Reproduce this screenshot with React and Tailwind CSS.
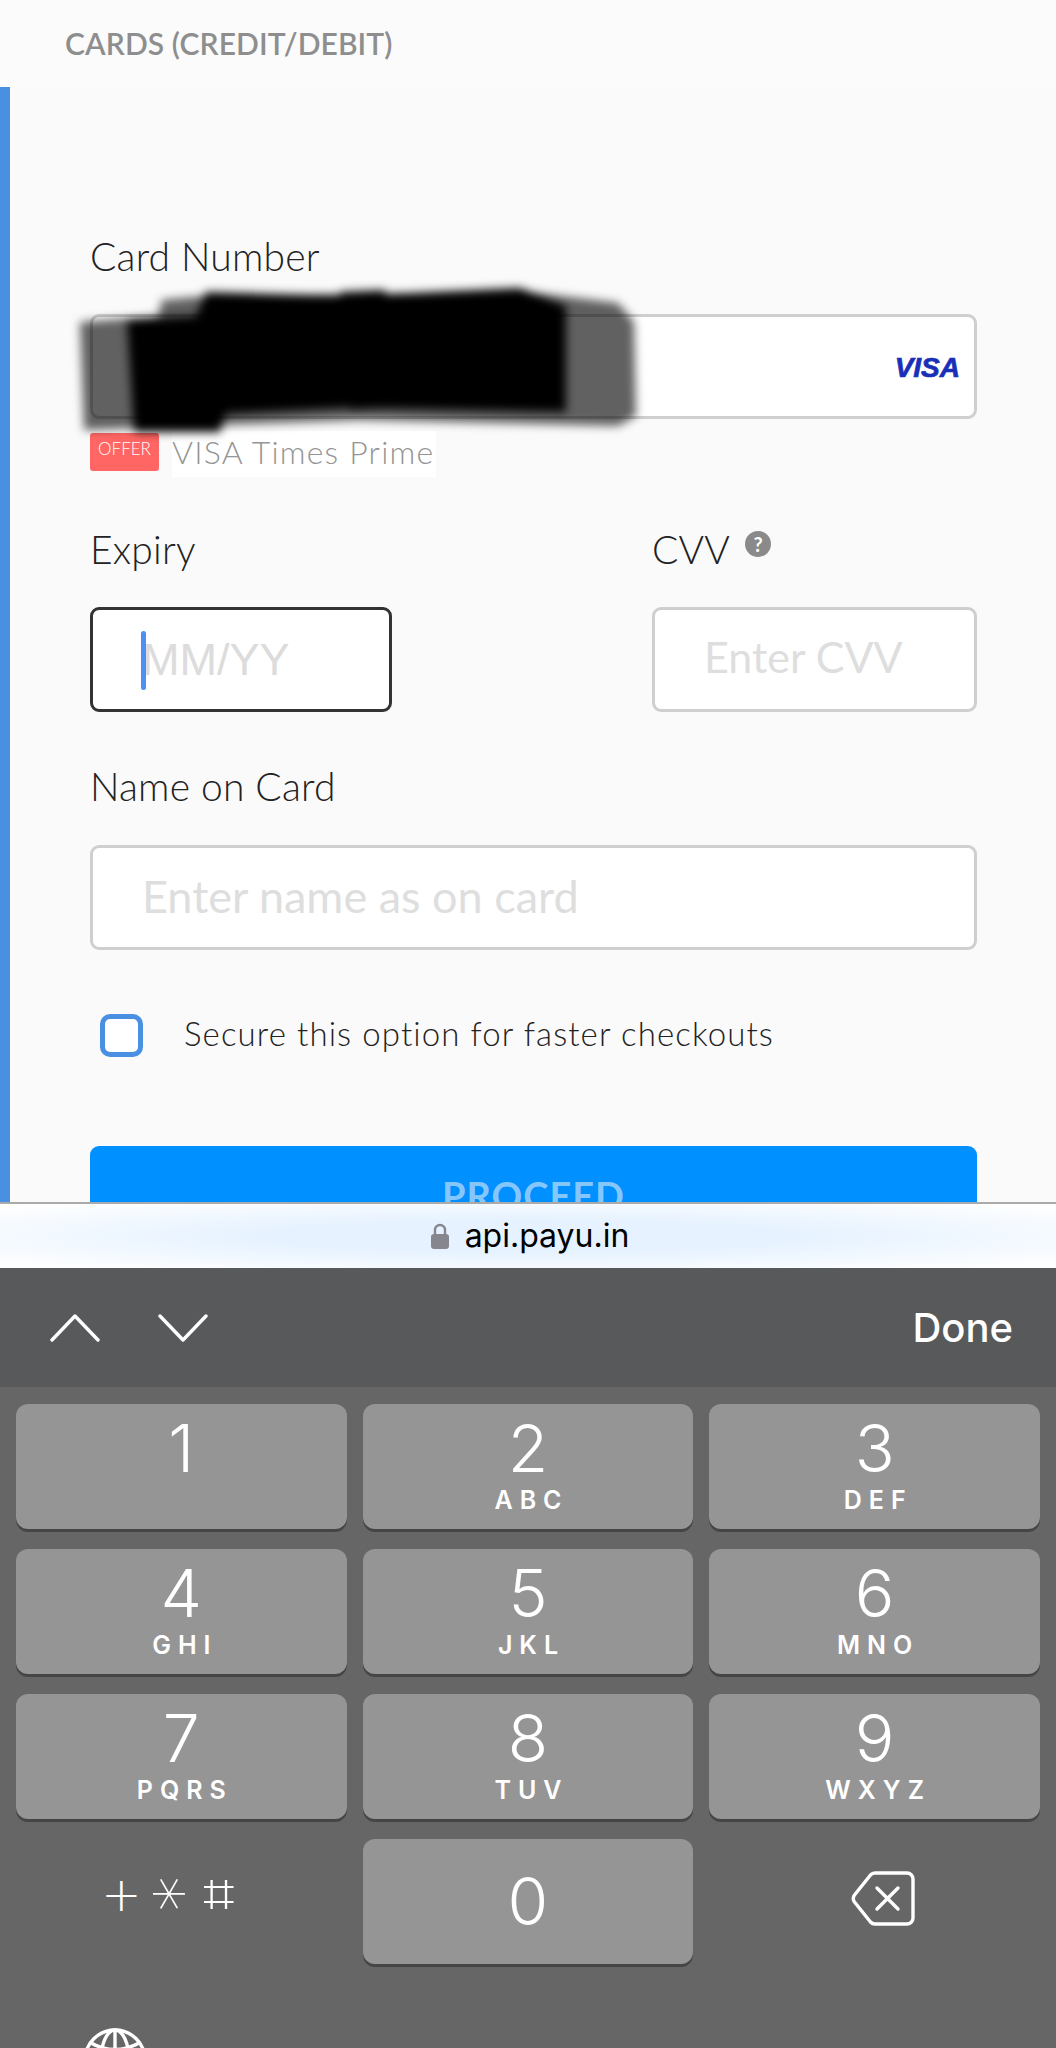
const keys = [
  ["1", ""],
  ["2", "ABC"],
  ["3", "DEF"],
  ["4", "GHI"],
  ["5", "JKL"],
  ["6", "MNO"],
  ["7", "PQRS"],
  ["8", "TUV"],
  ["9", "WXYZ"],
];

function Key({ digit, letters }) {
  return (
    <div className="h-[125px] rounded-[12px] bg-[#959596] shadow-[0_3px_0_#454545] flex flex-col items-center pt-[7px] text-white">
      <span className="h-[74px] text-[66px] leading-[74px] font-light">{digit}</span>
      <span className="h-[30px] text-[25px] leading-[30px] font-semibold tracking-[7px] pl-[7px]">{letters}</span>
    </div>
  );
}

function Scribble() {
  return (
    <svg className="absolute left-[60px] top-[270px]" width="600" height="180" viewBox="60 270 600 180">
      <defs>
        <filter id="smudge" x="-10%" y="-20%" width="120%" height="140%">
          <feGaussianBlur stdDeviation="5" />
        </filter>
      </defs>
      <g filter="url(#smudge)">
        <path d="M80 322 L158 316 L162 300 L205 296 L530 292 L618 303 L634 322 L636 416 L618 426 L360 420 L84 430 Z" fill="#000" opacity="0.62" />
        <path d="M127 320 L196 316 L206 292 L345 296 L520 288 L566 306 L566 412 L350 408 L226 414 L220 432 L134 432 Z" fill="#000" />
        <path d="M340 292 L385 290 L392 408 L350 410 Z" fill="#000" />
      </g>
    </svg>
  );
}

export default function App() {
  const label = "h-[40px] text-[39px] leading-[36px] tracking-[0.2px] font-light text-[#222] font-['Lato',sans-serif]";
  const field = "h-[105px] w-full rounded-[9px] border-[3px] border-[#cfcfcf] bg-white outline-none font-['Lato',sans-serif] placeholder:text-[#dedede]";

  return (
    <div className="relative w-[1056px] h-[2048px] overflow-hidden flex flex-col bg-[#666] font-['Inter',sans-serif]">
      <header className="h-[87px] shrink-0 bg-[#fbfbfb] pl-[65px] flex items-center text-[30px] tracking-[0.1px] font-['Lato',sans-serif] font-semibold text-[#8e8e8e]">
        CARDS (CREDIT/DEBIT)
      </header>

      <main className="h-[1115px] shrink-0 overflow-hidden border-l-[10px] border-[#4a90e2] bg-[#fafafa] pl-[80px] pr-[79px] pt-[151px] font-['Lato',sans-serif]">
        <div className={label}>Card Number</div>
        <div className="relative mt-[36px]">
          <input className={field} />
          <span className="absolute right-[17px] top-[38px] text-[28px] leading-[32px] font-['Liberation_Sans',sans-serif] font-bold italic text-[#1a2fb8] [-webkit-text-stroke:0.7px_#1a2fb8]">VISA</span>
        </div>
        <div className="mt-[12px] h-[46px] flex items-start">
          <span className="mt-[2px] h-[38px] w-[69px] rounded-[3px] bg-[#ff6664] text-white text-[17px] leading-[32px] text-center font-light">OFFER</span>
          <span className="ml-[13px] h-[46px] bg-white pr-[2px] text-[32px] leading-[42px] font-light tracking-[1.2px] text-[#959595]">VISA Times Prime</span>
        </div>

        <div className="mt-[54px] flex justify-between">
          <div className="w-[302px]">
            <div className={label}>Expiry</div>
            <div className="relative mt-[36px]">
              <input
                className="h-[105px] w-full rounded-[9px] border-[3px] border-[#333] bg-white pl-[49px] pt-[1px] outline-none text-[45px] font-['Liberation_Sans',sans-serif] placeholder:text-[#dcdcdc]"
                placeholder="MM/YY"
              />
              <span className="absolute left-[51px] top-[24px] h-[59px] w-[5px] rounded-full bg-[#4a90f5]" />
            </div>
          </div>
          <div className="w-[325px]">
            <div className="flex items-start">
              <div className={label}>CVV</div>
              <span className="ml-[15px] mt-[0px] flex h-[26px] w-[26px] items-center justify-center rounded-full bg-[#8a8a8a] text-[20px] font-bold leading-none text-white">?</span>
            </div>
            <input className={`${field} mt-[36px] pl-[49px] pb-[6px] text-[43px]`} placeholder="Enter CVV" />
          </div>
        </div>

        <div className={`${label} mt-[56px]`}>Name on Card</div>
        <input className={`${field} mt-[37px] pl-[49px] pb-[3px] text-[45px]`} placeholder="Enter name as on card" />

        <label className="mt-[62px] flex items-center pl-[10px]">
          <span className="h-[43px] w-[43px] rounded-[10px] border-[5px] border-[#4a90e2] bg-white" />
          <span className="ml-[41px] mt-[-3px] text-[33px] font-light tracking-[1.1px] text-[#222]">Secure this option for faster checkouts</span>
        </label>

        <button className="mt-[87px] block h-[104px] w-full rounded-[9px] bg-[#0090ff] pb-[4px] text-[38px] font-bold tracking-[1px] text-[#86c7fb]" type="button">
          PROCEED
        </button>
      </main>

      <div className="h-[66px] shrink-0 border-t-2 border-[#aaaaaa] bg-[radial-gradient(ellipse_at_center,#e6f2ff_35%,#ffffff_95%)] pl-[4px] flex items-center justify-center text-[32px] text-black font-['Inter',sans-serif]">
        <svg className="mr-[16px]" width="18" height="26" viewBox="0 0 18 26">
          <path d="M4 12 V7 a5 5 0 0 1 10 0 V12" fill="none" stroke="#85868e" strokeWidth="2.4" />
          <rect x="0" y="11" width="18" height="15" rx="3" fill="#85868e" />
        </svg>
        api.payu.in
      </div>

      <div className="h-[119px] shrink-0 bg-[#58595b] pl-[50px] pr-[43px] flex items-center justify-between text-white">
        <div className="flex gap-[58px]">
          <svg width="50" height="28" viewBox="0 0 50 28" fill="none" stroke="#fff" strokeWidth="3.4" strokeLinecap="round" strokeLinejoin="round">
            <path d="M2 26 L25 2 L48 26" />
          </svg>
          <svg width="50" height="28" viewBox="0 0 50 28" fill="none" stroke="#fff" strokeWidth="3.4" strokeLinecap="round" strokeLinejoin="round">
            <path d="M2 2 L25 26 L48 2" />
          </svg>
        </div>
        <span className="text-[40px] font-medium">Done</span>
      </div>

      <div className="flex-1 px-[16px] pt-[17px]">
        <div className="grid grid-cols-3 gap-x-[16px] gap-y-[20px]">
          {keys.map(([digit, letters]) => (
            <Key key={digit} digit={digit} letters={letters} />
          ))}
          <div className="h-[125px] flex items-center justify-center pr-[22px] pb-[16px] text-white font-['DejaVu_Sans',sans-serif] font-extralight">
            <span className="flex items-center leading-none">
              <span className="flex h-[40px] w-[49px] items-center justify-center text-[48px] leading-[40px]">+</span>
              <span className="flex h-[40px] w-[49px] items-center justify-center text-[70px] leading-[40px] rotate-90">∗</span>
              <span className="flex h-[40px] w-[49px] items-center justify-center text-[56px] leading-[40px]">⌗</span>
            </span>
          </div>
          <div className="h-[125px] rounded-[12px] bg-[#959596] shadow-[0_3px_0_#454545] flex items-center justify-center text-[66px] font-light text-white">
            0
          </div>
          <div className="h-[125px] flex items-center justify-center pl-[16px] pb-[6px]">
            <svg width="64" height="55" viewBox="0 0 64 55" fill="none" stroke="#fff" strokeWidth="3.4" strokeLinecap="round" strokeLinejoin="round">
              <path d="M24 2 H56 a6 6 0 0 1 6 6 V47 a6 6 0 0 1 -6 6 H24 a6 6 0 0 1 -4.5 -2 L3.5 31 a6 6 0 0 1 0 -7 L19.5 4 a6 6 0 0 1 4.5 -2 Z" />
              <path d="M26 17 L47 38 M47 17 L26 38" />
            </svg>
          </div>
        </div>
        <svg className="ml-[67px] mt-[64px]" width="64" height="64" viewBox="0 0 64 64" fill="none" stroke="#fff" strokeWidth="3.4">
          <circle cx="32" cy="32" r="30" />
          <ellipse cx="32" cy="32" rx="14" ry="30" />
          <path d="M32 2 V62 M2 32 H62 M8 15 Q32 28 56 15 M8 49 Q32 36 56 49" />
        </svg>
      </div>

      <Scribble />
    </div>
  );
}
